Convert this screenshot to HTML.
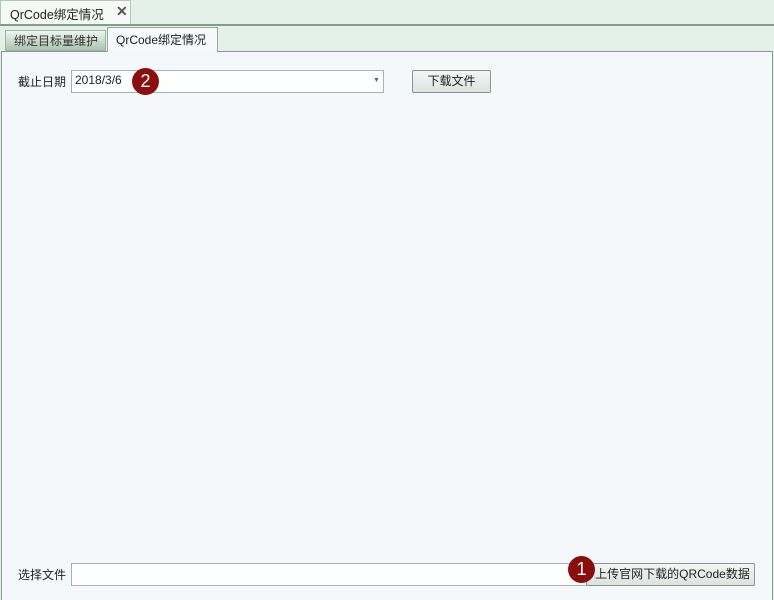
<!DOCTYPE html><html><head><meta charset="utf-8"><style>
*{margin:0;padding:0;box-sizing:border-box}
html,body{width:774px;height:600px;overflow:hidden}
body{background:#e4f1e8;position:relative;font-family:"Liberation Sans","Noto Sans CJK SC",sans-serif;font-size:12px;color:#222}
.a{position:absolute}
.btn{position:absolute;border:1px solid #8a9590;border-radius:2px;background:linear-gradient(#f4f6f4,#dde3de);text-align:center;line-height:20px;font-size:12px}
.circ{position:absolute;width:27px;height:27px;border-radius:50%;background:#8b0e0e;color:#fff;font-size:18px;text-align:center;line-height:27px}
</style></head><body>
<div class="a" style="left:0;top:0;width:131px;height:25px;background:#f6faf7;border:1px solid #b5c4ba;border-bottom:none"></div>
<div class="a" style="left:10px;top:4px;font-size:12.5px">QrCode绑定情况</div>
<div class="a" style="left:116px;top:3px;font-size:14px;font-weight:bold;color:#555">✕</div>
<div class="a" style="left:0;top:24px;width:774px;height:2px;background:#859a8c"></div>
<div class="a" style="left:5px;top:30px;width:101px;height:21px;background:linear-gradient(#eef5f0,#a9c4b1);border:1px solid #9fb2a5"></div>
<div class="a" style="left:14px;top:32px;color:#333">绑定目标量维护</div>
<div class="a" style="left:107px;top:27px;width:111px;height:25px;background:#f6f9fa;border:1px solid #9aa8a0;border-bottom:none;z-index:2"></div>
<div class="a" style="left:116px;top:31px;z-index:3">QrCode绑定情况</div>
<div class="a" style="left:1px;top:51px;width:772px;height:549px;background:#f5f8fa;border:1px solid #8d9a92;border-bottom:none"></div>
<div class="a" style="left:18px;top:73px">截止日期</div>
<div class="a" style="left:71px;top:70px;width:313px;height:23px;background:#fff;border:1px solid #aab2b0"></div>
<div class="a" style="left:75px;top:73px">2018/3/6</div>
<div class="a" style="left:373px;top:77px;font-size:7px;color:#666">▼</div>
<div class="circ" style="left:132px;top:68px">2</div>
<div class="btn" style="left:412px;top:70px;width:79px;height:23px">下载文件</div>
<div class="a" style="left:18px;top:566px">选择文件</div>
<div class="a" style="left:71px;top:563px;width:516px;height:23px;background:#fff;border:1px solid #aab2b0"></div>
<div class="btn" style="left:586px;top:563px;width:169px;height:23px;padding-left:4px">上传官网下载的QRCode数据</div>
<div class="circ" style="left:568px;top:556px">1</div>
</body></html>
